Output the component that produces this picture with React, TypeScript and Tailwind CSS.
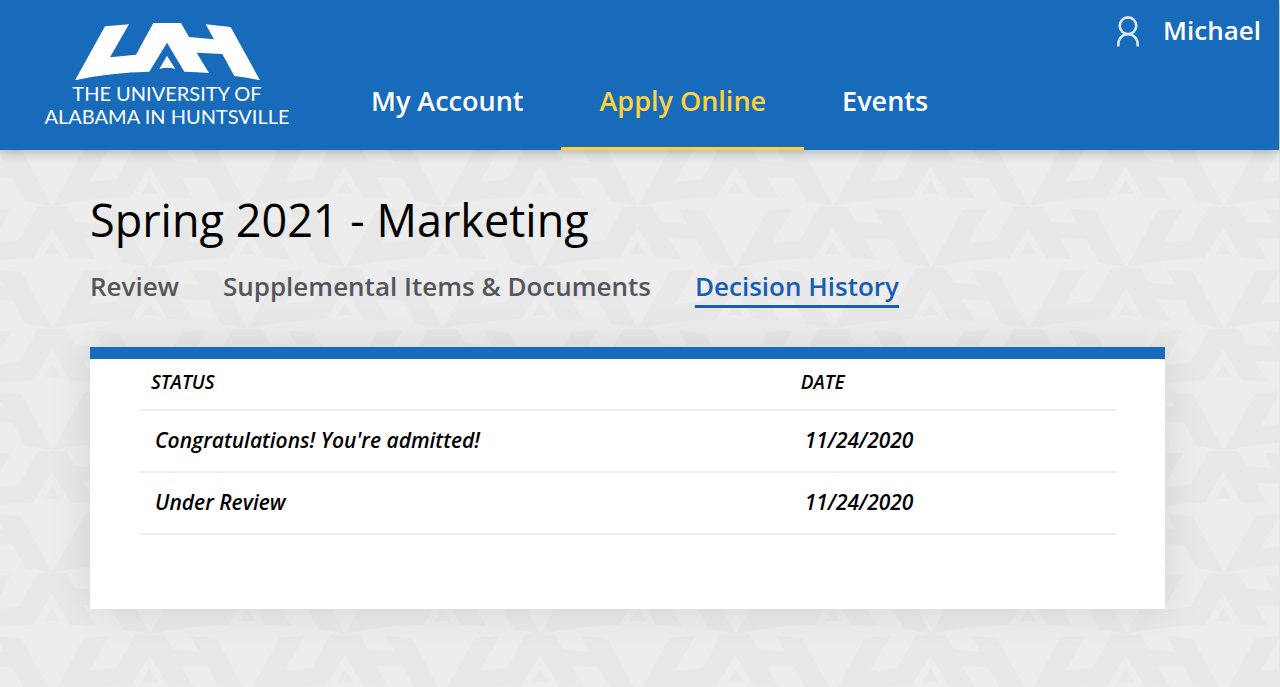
const NAV_ITEMS = [
  { label: "My Account", active: false },
  { label: "Apply Online", active: true },
  { label: "Events", active: false },
];

const TABS = [
  { label: "Review", active: false },
  { label: "Supplemental Items & Documents", active: false },
  { label: "Decision History", active: true },
];

const DECISIONS = [
  { id: 1, status: "Congratulations! You're admitted!", date: "11/24/2020" },
  { id: 2, status: "Under Review", date: "11/24/2020" },
];

const MARK =
  "M0 172 L90 10 L162 4 L105 103 L183 95 L235 0 L318 0 L342 42 L417 49 L392 4 L467 12 L555 172 Q518 164 478 159 L442 93 L365 89 L402 150 Q365 147 328 146 L276 59 L223 146 Q105 148 0 172 Z M276 98 L301 138 Q276 131 253 138 Z";

function Logo() {
  return (
    <a href="#" className="flex w-[252px] flex-col items-center text-xl leading-[23px] text-white font-['Lato',sans-serif]">
      <svg viewBox="0 0 555 172" className="mb-[2px] w-[185px]" fill="currentColor" aria-hidden="true">
        <path d={MARK} />
      </svg>
      <span>THE UNIVERSITY OF</span>
      <span>ALABAMA IN HUNTSVILLE</span>
    </a>
  );
}

function Backdrop() {
  return (
    <svg className="absolute inset-0 h-full w-full text-[#e8e8e8]" fill="currentColor" aria-hidden="true">
      <defs>
        <pattern
          id="marks"
          width="195.25"
          height="122.2"
          patternUnits="userSpaceOnUse"
          patternTransform="translate(-45.25 56.6)"
        >
          <path d={MARK} transform="scale(.3518 .3535)" />
          <path d={MARK} transform="translate(-97.6 61.1) scale(.3518 .3535)" />
          <path d={MARK} transform="translate(97.6 61.1) scale(.3518 .3535)" />
        </pattern>
      </defs>
      <rect width="100%" height="100%" fill="url(#marks)" />
    </svg>
  );
}

export default function App() {
  return (
    <div className="flex min-h-screen flex-col border-r border-gray-200 bg-[#ededed] font-['Open_Sans',sans-serif] text-black">
      <header className="relative z-10 flex h-[150px] bg-[#176bba] pl-[41px] pr-[18px] shadow-[0_1px_12px_rgba(0,0,0,0.3)]">
        <div className="w-[292px] pt-[23px]">
          <Logo />
        </div>
        <nav className="flex self-end">
          {NAV_ITEMS.map((item) => (
            <a
              key={item.label}
              href="#"
              className={
                item.active
                  ? "border-b-[3px] border-[#fdd23e] px-[38px] pb-7 text-[27px] leading-9 font-semibold text-[#fdd23e]"
                  : "border-b-[3px] border-transparent px-[38px] pb-7 text-[27px] leading-9 font-semibold text-white"
              }
            >
              {item.label}
            </a>
          ))}
        </nav>
        <a href="#" className="ml-auto flex items-center gap-6 self-start pt-3 text-[26px] leading-9 font-semibold text-white">
          <svg
            viewBox="0 0 22 36"
            className="h-9 w-[22px] text-[#dbe9f6]"
            fill="none"
            stroke="currentColor"
            strokeWidth="2.6"
            aria-hidden="true"
          >
            <circle cx="11" cy="13.7" r="8.3" />
            <path d="M1.3 34.5V32.5C1.3 26.5 5.5 22.3 11 22.3S20.7 26.5 20.7 32.5V34.5" />
          </svg>
          Michael
        </a>
      </header>

      <main className="relative flex-1">
        <Backdrop />
        <div className="relative pl-[90px] pr-[114px]">
          <h1 className="pt-10 text-[45px] leading-[60px]">Spring 2021 - Marketing</h1>
          <div className="mt-[18px] flex gap-11">
            {TABS.map((tab) => (
              <a
                key={tab.label}
                href="#"
                className={
                  tab.active
                    ? "border-b-[3px] border-[#175db5] text-[26px] leading-[37px] font-semibold text-[#175db5]"
                    : "border-b-[3px] border-transparent text-[26px] leading-[37px] font-semibold text-[#54565b]"
                }
              >
                {tab.label}
              </a>
            ))}
          </div>

          <section className="mt-[39px] border-t-12 border-[#176bba] bg-white px-[49px] pb-[74px] shadow-[0_0_40px_rgba(0,0,0,0.1)]">
            <table className="w-full table-fixed text-left italic">
              <thead>
                <tr className="h-[51px] border-b-2 border-[#eeeeee] text-[19px]">
                  <th className="w-[66.5%] pb-[3px] pl-3 font-semibold">STATUS</th>
                  <th className="pb-[3px] pl-3 font-semibold">DATE</th>
                </tr>
              </thead>
              <tbody>
                {DECISIONS.map((decision) => (
                  <tr key={decision.id} className="h-[62px] border-b-2 border-[#eeeeee] text-[21px] font-semibold">
                    <td className="pb-px pl-4">{decision.status}</td>
                    <td className="pb-px pl-4">{decision.date}</td>
                  </tr>
                ))}
              </tbody>
            </table>
          </section>
        </div>
      </main>
    </div>
  );
}
